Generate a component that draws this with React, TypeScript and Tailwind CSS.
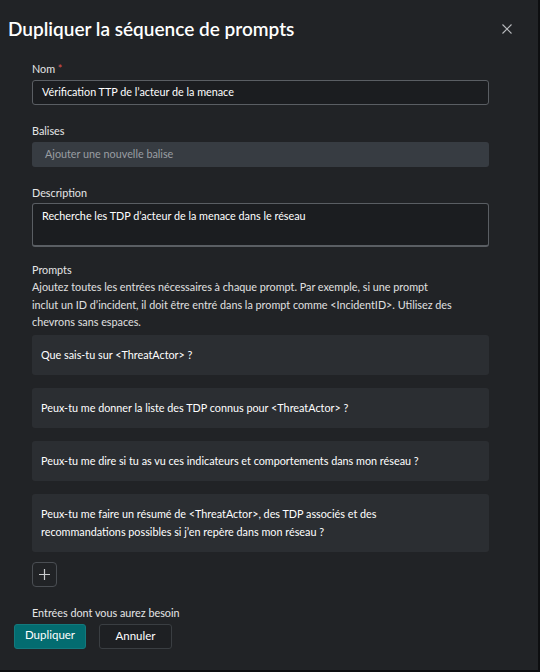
import React from "react";

const prompts: React.ReactNode[] = [
  "Que sais-tu sur <ThreatActor> ?",
  "Peux-tu me donner la liste des TDP connus pour <ThreatActor> ?",
  "Peux-tu me dire si tu as vu ces indicateurs et comportements dans mon réseau ?",
  <>
    Peux-tu me faire un résumé de &lt;ThreatActor&gt;, des TDP associés et des
    <br />
    recommandations possibles si j’en repère dans mon réseau ?
  </>,
];

export default function App() {
  return (
    <div
      className="w-[540px] h-[672px] bg-[#0d0e10] overflow-hidden text-[#e6e6e6]"
      style={{ fontFamily: 'Lato, "Noto Sans", sans-serif' }}
    >
      <div className="w-[538px] h-[670px] bg-[#212326] flex flex-col">
        <div className="flex items-center justify-between pl-2 pr-[26px] h-[58px]">
          <h1 className="text-[19px] font-semibold text-white">
            Dupliquer la séquence de prompts
          </h1>
          <svg width="10" height="10" viewBox="0 0 10 10">
            <path d="M0.5 0.5L9.5 9.5M9.5 0.5L0.5 9.5" stroke="#b8babd" strokeWidth="1.1" />
          </svg>
        </div>
        <div className="pl-[32px] pr-[49px] flex flex-col text-[10.8px]">
          <div className="mt-[2px] h-[17px] leading-[17px]">
            Nom <span className="text-[#d9534f]">*</span>
          </div>
          <div className="mt-[3px] h-[25px] rounded-[3px] border border-[#5a5e63] bg-[#1b1d20] flex items-center px-[9px] text-white">
            Vérification TTP de l’acteur de la menace
          </div>
          <div className="mt-[17px] h-[17px] leading-[17px]">Balises</div>
          <div className="mt-[3px] h-[25px] rounded-[3px] bg-[#373c42] flex items-center px-[13px] text-[#9a9ea3]">
            Ajouter une nouvelle balise
          </div>
          <div className="mt-[17px] h-[17px] leading-[17px]">Description</div>
          <div className="mt-[2px] h-[44px] rounded-[3px] border border-[#5a5e63] border-b-2 bg-[#1b1d20] px-[9px] pt-[3px] leading-[17px] text-white">
            Recherche les TDP d’acteur de la menace dans le réseau
          </div>
          <div className="mt-[14px] h-[17px] leading-[17px]">Prompts</div>
          <p className="leading-[17.5px] text-[#e0e0e0]">
            Ajoutez toutes les entrées nécessaires à chaque prompt. Par exemple, si une prompt
            <br />
            inclut un ID d’incident, il doit être entré dans la prompt comme &lt;IncidentID&gt;. Utilisez des
            <br />
            chevrons sans espaces.
          </p>
          <div className="mt-[4px] flex flex-col gap-[13px]">
            {prompts.map((p, i) => (
              <div
                key={i}
                className="rounded-[3px] bg-[#2b2e32] px-[9px] py-[11px] leading-[18px] text-white"
              >
                {p}
              </div>
            ))}
          </div>
          <div className="mt-[10px] w-[25px] h-[25px] rounded-[4px] border border-[#4a4e53] flex items-center justify-center">
            <svg width="13" height="13" viewBox="0 0 13 13">
              <path d="M6.5 1V12M1 6.5H12" stroke="#c8cacd" strokeWidth="1.2" />
            </svg>
          </div>
          <div className="mt-[17px] h-[17px] leading-[17px]">Entrées dont vous aurez besoin</div>
        </div>
        <div className="flex gap-[13px] pl-[14px] mt-[3px] text-[11.5px]">
          <div className="w-[72px] h-[25px] rounded-[3px] bg-[#036c70] border border-[#13797d] flex items-center justify-center text-white pb-[2px]">
            Dupliquer
          </div>
          <div className="w-[73px] h-[25px] rounded-[3px] border border-[#3a3e42] bg-[#1e2023] flex items-center justify-center text-white">
            Annuler
          </div>
        </div>
      </div>
    </div>
  );
}
